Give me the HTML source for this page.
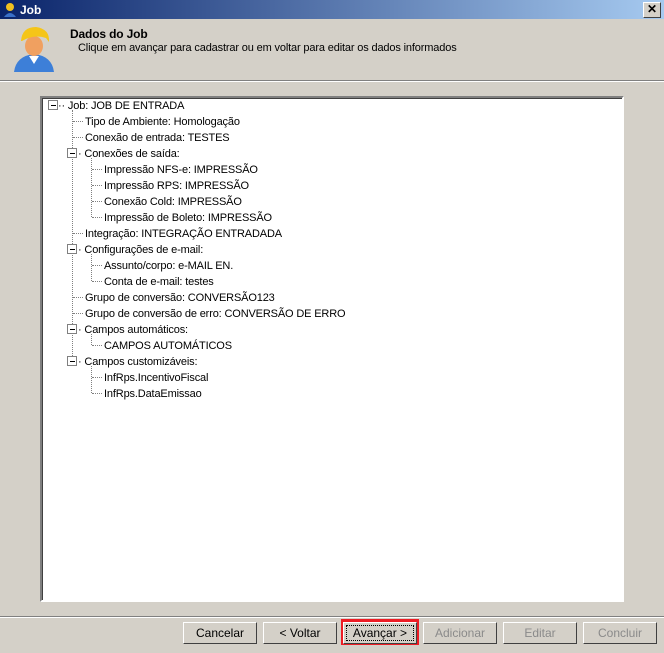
<!DOCTYPE html><html><head><style>
body{margin:0;width:664px;height:653px;background:#d4d0c8;font-family:"Liberation Sans",Tahoma,sans-serif;font-size:11px;position:relative;overflow:hidden}
.t{position:absolute;left:0;top:0;width:664px;height:19px;background:linear-gradient(90deg,#0a246a,#a6caf0);color:#fff;font-weight:bold;font-size:12px}
.x{position:absolute;right:3px;top:2px;width:16px;height:14px;background:#d4d0c8;border:1px solid;border-color:#fff #404040 #404040 #fff;color:#000;font-size:12px;line-height:13px;text-align:center}
.box{position:absolute;left:40px;top:96px;width:580px;height:502px;background:#fff;border:2px solid;border-color:#808080 #fff #fff #808080;box-shadow:inset 1px 1px #404040}
.r{position:absolute;white-space:nowrap;color:#000;font-size:11px;letter-spacing:-0.15px;transform:translateY(2px)}
.pm{position:absolute;width:8px;height:8px;border:1px solid #808080;background:#fff}
.pm:after{content:"";position:absolute;left:2px;top:4px;width:5px;height:1px;background:#000}
.v{position:absolute;border-left:1px dotted #808080;width:0}
.h{position:absolute;border-top:1px dotted #808080;height:0}
.b{position:absolute;top:622px;width:72px;height:20px;background:#d4d0c8;border:1px solid;border-color:#fff #404040 #404040 #fff;text-align:center;line-height:20px;font-size:12px}
.d{color:#8a8a8a}
</style></head><body>
<div class="t"><svg style="position:absolute;left:3px;top:2px" width="14" height="15"><circle cx="7" cy="5" r="4" fill="#f0c020"/><path d="M1 15 Q7 7 13 15Z" fill="#3a70c8"/></svg><span style="position:absolute;left:20px;top:3px">Job</span><div class="x">✕</div></div>
<svg style="position:absolute;left:12px;top:24px" width="44" height="50"><path d="M2 48 Q4 32 22 30 Q40 32 42 48Z" fill="#3d7fd8"/><path d="M17 32 L22 40 L27 32Z" fill="#fff"/><ellipse cx="22" cy="22" rx="9" ry="10" fill="#f0a060"/><path d="M9 17 Q10 3 24 3 Q38 5 37 18 L34 14 Q22 10 10 17Z" fill="#f5c518"/></svg>
<div class="r" style="left:70px;top:25px;font-weight:bold;font-size:12px">Dados do Job</div>
<div class="r" style="left:78px;top:40px">Clique em avançar para cadastrar ou em voltar para editar os dados informados</div>
<div style="position:absolute;left:0;top:80px;width:664px;height:1px;background:#808080;border-bottom:1px solid #fff"></div>
<div class="box"></div>
<div id="tree">
<div class="pm" style="left:48px;top:100px"></div><div class="r" style="left:58px;top:98px">·· Job: JOB DE ENTRADA</div>
<div class="v" style="left:72px;top:110px;height:248px"></div>
<div class="h" style="left:73px;top:121px;width:10px"></div><div class="r" style="left:85px;top:114px">Tipo de Ambiente: Homologação</div>
<div class="h" style="left:73px;top:137px;width:10px"></div><div class="r" style="left:85px;top:130px">Conexão de entrada: TESTES</div>
<div class="pm" style="left:67px;top:148px"></div><div class="r" style="left:78px;top:146px">· Conexões de saída:</div>
<div class="v" style="left:91px;top:158px;height:59px"></div>
<div class="h" style="left:92px;top:169px;width:10px"></div><div class="r" style="left:104px;top:162px">Impressão NFS-e: IMPRESSÃO</div>
<div class="h" style="left:92px;top:185px;width:10px"></div><div class="r" style="left:104px;top:178px">Impressão RPS: IMPRESSÃO</div>
<div class="h" style="left:92px;top:201px;width:10px"></div><div class="r" style="left:104px;top:194px">Conexão Cold: IMPRESSÃO</div>
<div class="h" style="left:92px;top:217px;width:10px"></div><div class="r" style="left:104px;top:210px">Impressão de Boleto: IMPRESSÃO</div>
<div class="h" style="left:73px;top:233px;width:10px"></div><div class="r" style="left:85px;top:226px">Integração: INTEGRAÇÃO ENTRADADA</div>
<div class="pm" style="left:67px;top:244px"></div><div class="r" style="left:78px;top:242px">· Configurações de e-mail:</div>
<div class="v" style="left:91px;top:254px;height:27px"></div>
<div class="h" style="left:92px;top:265px;width:10px"></div><div class="r" style="left:104px;top:258px">Assunto/corpo: e-MAIL EN.</div>
<div class="h" style="left:92px;top:281px;width:10px"></div><div class="r" style="left:104px;top:274px">Conta de e-mail: testes</div>
<div class="h" style="left:73px;top:297px;width:10px"></div><div class="r" style="left:85px;top:290px">Grupo de conversão: CONVERSÃO123</div>
<div class="h" style="left:73px;top:313px;width:10px"></div><div class="r" style="left:85px;top:306px">Grupo de conversão de erro: CONVERSÃO DE ERRO</div>
<div class="pm" style="left:67px;top:324px"></div><div class="r" style="left:78px;top:322px">· Campos automáticos:</div>
<div class="v" style="left:91px;top:334px;height:11px"></div>
<div class="h" style="left:92px;top:345px;width:10px"></div><div class="r" style="left:104px;top:338px">CAMPOS AUTOMÁTICOS</div>
<div class="pm" style="left:67px;top:356px"></div><div class="r" style="left:78px;top:354px">· Campos customizáveis:</div>
<div class="v" style="left:91px;top:366px;height:27px"></div>
<div class="h" style="left:92px;top:377px;width:10px"></div><div class="r" style="left:104px;top:370px">InfRps.IncentivoFiscal</div>
<div class="h" style="left:92px;top:393px;width:10px"></div><div class="r" style="left:104px;top:386px">InfRps.DataEmissao</div>
</div>
<div style="position:absolute;left:0;top:616px;width:664px;height:1px;background:#808080;border-bottom:1px solid #fff"></div>
<div class="b" style="left:183px">Cancelar</div>
<div class="b" style="left:263px">&lt; Voltar</div>
<div style="position:absolute;left:341px;top:619px;width:72px;height:20px;border:3px solid #ed1c24"></div>
<div class="b" style="left:343px"><span style="border:1px dotted #000;padding:0 6px">Avançar &gt;</span></div>
<div class="b d" style="left:423px">Adicionar</div>
<div class="b d" style="left:503px">Editar</div>
<div class="b d" style="left:583px">Concluir</div>
</body></html>
